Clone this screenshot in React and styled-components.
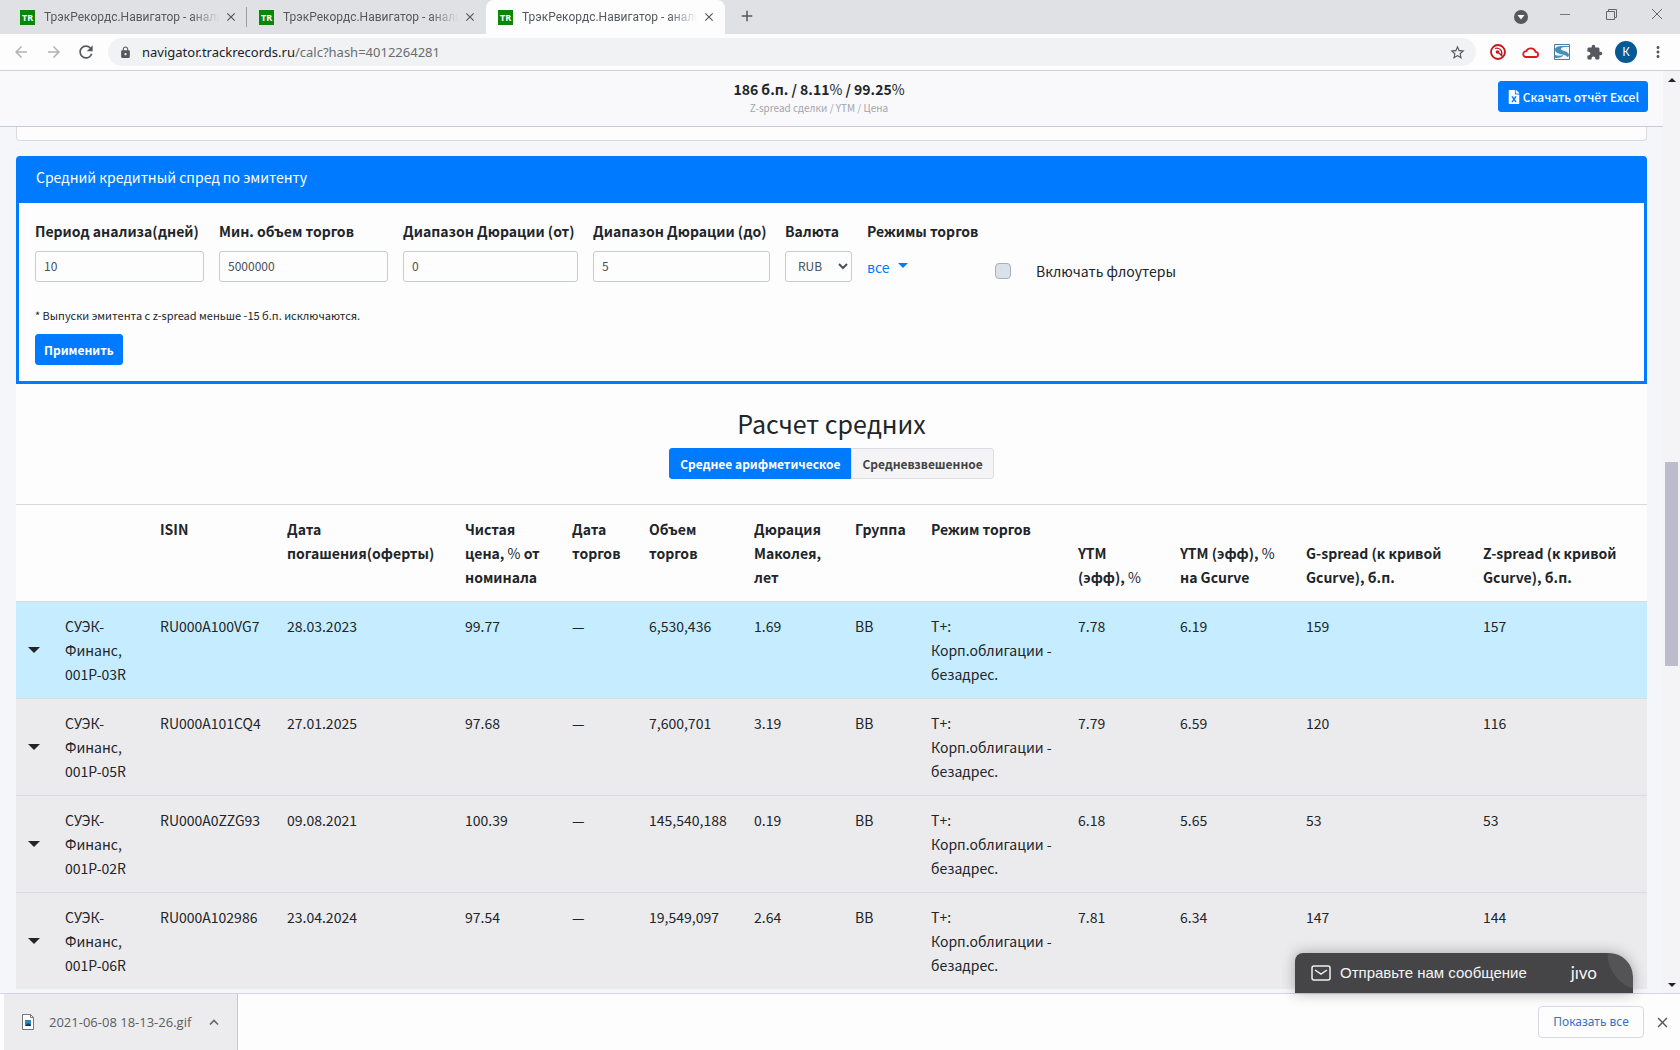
import React from 'react'
import styled, { createGlobalStyle } from 'styled-components'
import { FaFileExcel } from 'react-icons/fa'
import { MdArrowBack, MdArrowForward, MdRefresh, MdLock, MdStarBorder, MdExtension, MdMoreVert, MdClose, MdAdd } from 'react-icons/md'

const siteFont = '"Noto Sans CJK SC", "Noto Sans", sans-serif'
const chromeFont = '"Noto Sans", "Open Sans", sans-serif'
const blue = '#007bff'

const GlobalStyle = createGlobalStyle`
  *, *:before, *:after {
    box-sizing: border-box;
  }

  body {
    margin: 0;
    overflow: hidden;
    font-family: ${siteFont};
    font-size: 14px;
    line-height: 24px;
    color: #212529;
  }

  button, input, select {
    font-family: inherit;
  }

  svg {
    display: block;
    flex: none;
  }
`

const Browser = styled.div`
  display: flex;
  flex-direction: column;
  height: 100vh;
`

/* tabs */

const TabStrip = styled.div`
  display: flex;
  flex: none;
  height: 34px;
  padding-left: 8px;
  background: #dfe1e5;
`

const Tab = styled.div`
  display: flex;
  align-items: center;
  gap: 9px;
  width: 239px;
  padding: 0 7px 0 12px;
  border-radius: 8px 8px 0 0;
  border-right: 1px solid ${p => (p.$divider ? '#9a9da1' : 'transparent')};
  border-image: ${p => (p.$divider ? 'linear-gradient(transparent 22%, #9a9da1 22%, #9a9da1 78%, transparent 78%) 1' : 'none')};
  background: ${p => (p.$active ? '#fdfdfe' : 'transparent')};
`

const Favicon = styled.span`
  flex: none;
  width: 15px;
  height: 15px;
  background: #0a870a;
  color: #fff;
  font: bold 9px/15px "Open Sans", sans-serif;
  text-align: center;
`

const TabTitle = styled.span`
  flex: 1;
  min-width: 0;
  margin-right: -9px;
  white-space: nowrap;
  font-family: Roboto, sans-serif;
  font-size: 12px;
  line-height: 16px;
  color: #55585c;
  mask-image: linear-gradient(to right, #000 82%, transparent 98%);
`

const IconButton = styled.button`
  display: flex;
  align-items: center;
  justify-content: center;
  flex: none;
  width: ${p => p.$width || 16}px;
  height: ${p => p.$height || 16}px;
  padding: 0;
  border: 0;
  background: none;
  color: ${p => p.$color || '#55585c'};
`

const WindowControls = styled.div`
  display: flex;
  margin-left: auto;
`

/* address bar */

const Toolbar = styled.div`
  display: flex;
  align-items: center;
  flex: none;
  height: 37px;
  padding: 0 6px 0 5px;
  border-bottom: 1px solid #cfcfd4;
  background: #fdfdfe;
  font-family: ${chromeFont};
`

const Omnibox = styled.div`
  display: flex;
  align-items: center;
  flex: 1;
  gap: 10px;
  height: 28px;
  margin: 0 6px 0 6px;
  padding: 0 10px 0 11px;
  border-radius: 14px;
  background: #f0f2f4;
  font-size: 13px;
  line-height: 20px;
  color: #6a6d71;
`

const Url = styled.span`
  flex: 1;

  b {
    font-weight: normal;
    color: #202124;
  }
`

const Avatar = styled.span`
  width: 22px;
  height: 22px;
  border-radius: 50%;
  background: #065a94;
  color: #fff;
  font-size: 12px;
  line-height: 22px;
  text-align: center;
`

/* page */

const Viewport = styled.div`
  position: relative;
  display: flex;
  flex: 1;
  min-height: 0;
`

const Page = styled.main`
  flex: 1;
  overflow: hidden;
  background: #f5f6f9;
`

const PageHeader = styled.header`
  display: grid;
  grid-template-columns: 1fr auto 1fr;
  align-items: start;
  height: 56px;
  padding: 8px 15px 0 0;
  border-bottom: 1px solid #c9c9dc;
  background: #f9f9fb;
`

const Summary = styled.div`
  grid-column: 2;
  margin-right: 10px;
  text-align: center;
  font-size: 14px;
  line-height: 20px;
  font-weight: bold;
`

const SummaryNote = styled.div`
  font-size: 10px;
  line-height: 18px;
  font-weight: normal;
  color: #a4a4ac;
`

const Thin = styled.span`
  font-weight: normal;
`

const Button = styled.button`
  display: inline-flex;
  align-items: center;
  justify-content: center;
  gap: 2px;
  height: 31px;
  padding: 0 ${p => (p.$wide ? 10 : 8)}px;
  border: 1px solid ${p => (p.$light ? '#dddde2' : blue)};
  border-radius: ${p => p.$radius || '3px'};
  background: ${p => (p.$light ? '#f4f4f6' : blue)};
  color: ${p => (p.$light ? '#444' : '#fff')};
  font-size: 12px;
  line-height: 18px;
  font-weight: ${p => (p.$medium ? 500 : 'bold')};
  white-space: nowrap;
`

const HeaderAction = styled.div`
  justify-self: end;
  padding-top: 2px;
`

const PreviousCard = styled.div`
  height: 14px;
  margin: 0 16px 15px;
  border: 1px solid #dadadf;
  border-top: 0;
  border-radius: 0 0 4px 4px;
  background: #fdfdfe;
`

const Content = styled.section`
  margin: 0 16px;
  background: #fdfdfe;
`

const FilterCard = styled.form`
  border: 3px solid ${blue};
  border-radius: 4px 4px 0 0;
`

const FilterTitle = styled.div`
  height: 44px;
  padding: 6px 17px 0;
  background: ${blue};
  color: #fff;
`

const FilterBody = styled.div`
  padding: 16px;
`

const Fields = styled.div`
  display: flex;
  gap: 15px;
  height: 87px;
`

const Field = styled.div`
  display: flex;
  flex-direction: column;
  gap: 8px;
  width: ${p => p.$width}px;
  white-space: nowrap;
  font-weight: bold;
`

const inputStyle = `
  width: 100%;
  height: 31px;
  border: 1px solid #c6cada;
  border-radius: 3px;
  background: #fdfdfe;
  color: #495057;
  font-size: 12px;
`

const Input = styled.input`
  ${inputStyle}
  padding: 2px 8px 4px;
`

const Select = styled.select`
  ${inputStyle}
  padding: 2px 0 4px 8px;
`

const ModeLink = styled.a`
  display: flex;
  gap: 8px;
  padding-top: 4px;
  font-weight: normal;
  color: ${blue};
  text-decoration: none;

  svg {
    margin-top: 8px;
  }
`

const CheckLabel = styled.label`
  display: flex;
  align-items: center;
  align-self: flex-start;
  gap: 25px;
  padding-top: 40px;
`

const Checkbox = styled.input`
  appearance: none;
  width: 16px;
  height: 16px;
  margin: 0;
  border: 1px solid #a8b0bb;
  border-radius: 4px;
  background: #dbe1e8;
`

const Note = styled.p`
  height: 28px;
  margin: 0;
  font-size: 11px;
  line-height: 18px;
`

const Averages = styled.div`
  height: 120px;
  padding-top: 22px;
  text-align: center;
`

const Title = styled.h3`
  margin: 0 0 8px;
  font-size: 25px;
  line-height: 34px;
  font-weight: normal;
`

const Toggle = styled.div`
  display: flex;
  justify-content: center;
`

const Table = styled.table`
  width: 100%;
  table-layout: fixed;
  border-collapse: collapse;

  th, td {
    padding: 12px 0 12px 12px;
    border-top: 1px solid #dadade;
    text-align: left;
    vertical-align: top;
  }
`

const HeadCell = styled.th`
  && {
    vertical-align: ${p => (p.$bottom ? 'bottom' : 'top')};
  }
`

const Row = styled.tr`
  background: ${p => (p.$selected ? '#c5edff' : '#ebebee')};

  && td:first-child {
    vertical-align: middle;
  }
`

const Scrollbar = styled.div`
  display: flex;
  flex-direction: column;
  align-items: center;
  justify-content: space-between;
  width: 17px;
  padding: 7px 0 6px;
  background: #f4f4f6;
`

const Thumb = styled.div`
  width: 13px;
  height: 204px;
  margin-top: 62px;
  background: #bcbccc;
`

const Chat = styled.button`
  position: absolute;
  right: 47px;
  bottom: 0;
  display: flex;
  align-items: center;
  width: 338px;
  height: 40px;
  padding: 0 36px 0 16px;
  border: 0;
  border-radius: 8px 24px 0 0;
  background: radial-gradient(circle at 350px 0, #545456 37px, #454547 38px);
  box-shadow: 0 0 14px rgba(0, 0, 0, 0.3);
  color: #f5f5f5;

  && {
    font: 15px/20px "Liberation Sans", Arial, sans-serif;
  }

  svg {
    margin-right: 9px;
  }
`

const Jivo = styled.span`
  margin-left: auto;
  font: 17px/20px Lato, sans-serif;
`

/* downloads */

const Downloads = styled.footer`
  display: flex;
  align-items: center;
  flex: none;
  height: 57px;
  padding: 0 9px 0 4px;
  border-top: 1px solid #d4d4e2;
  background: #fdfdfe;
  font-family: ${chromeFont};
  font-size: 12px;
`

const Download = styled.div`
  display: flex;
  align-items: center;
  width: 234px;
  height: 56px;
  padding: 0 15px 0 18px;
  border-right: 1px solid #c6c6cc;
  background: #ececee;
  color: #5b5d61;

  span {
    flex: 1;
    margin-left: 15px;
    font-family: "Open Sans", sans-serif;
    font-size: 13px;
    white-space: nowrap;
  }
`

const ShowAll = styled.button`
  width: 106px;
  height: 32px;
  margin: 0 9px 0 auto;
  padding: 0 0 2px;
  border: 1px solid #d8d8e0;
  border-radius: 4px;
  background: none;
  color: #3b6fc4;
  font-size: 12px;
`

const columns = [
  { width: 37 },
  { width: 95 },
  { width: 127, title: 'ISIN' },
  { width: 178, title: <>Дата<br />погашения(оферты)</> },
  { width: 107, title: <>Чистая<br />цена, <Thin>%</Thin> от<br />номинала</> },
  { width: 77, title: <>Дата<br />торгов</> },
  { width: 105, title: <>Объем<br />торгов</> },
  { width: 101, title: <>Дюрация<br />Маколея,<br />лет</> },
  { width: 76, title: 'Группа' },
  { width: 147, title: 'Режим торгов' },
  { width: 102, bottom: true, title: <>YTM<br />(эфф), <Thin>%</Thin></> },
  { width: 126, bottom: true, title: <>YTM (эфф), <Thin>%</Thin><br />на Gcurve</> },
  { width: 177, bottom: true, title: <>G-spread (к кривой<br />Gcurve), б.п.</> },
  { width: 176, bottom: true, title: <>Z-spread (к кривой<br />Gcurve), б.п.</> },
]

const rows = [
  ['001P-03R', 'RU000A100VG7', '28.03.2023', '99.77', '6,530,436', '1.69', '7.78', '6.19', '159', '157'],
  ['001P-05R', 'RU000A101CQ4', '27.01.2025', '97.68', '7,600,701', '3.19', '7.79', '6.59', '120', '116'],
  ['001P-02R', 'RU000A0ZZG93', '09.08.2021', '100.39', '145,540,188', '0.19', '6.18', '5.65', '53', '53'],
  ['001P-06R', 'RU000A102986', '23.04.2024', '97.54', '19,549,097', '2.64', '7.81', '6.34', '147', '144'],
]

const fields = [
  { id: 'period', label: 'Период анализа(дней)', value: '10', width: 169 },
  { id: 'volume', label: 'Мин. объем торгов', value: '5000000', width: 169 },
  { id: 'from', label: 'Диапазон Дюрации (от)', value: '0', width: 175 },
  { id: 'to', label: 'Диапазон Дюрации (до)', value: '5', width: 177 },
]

const Triangle = ({ width = 12, up }) => (
  <svg width={width} height={width / 2} viewBox="0 0 12 6">
    <path d={up ? 'M0 6h12L6 0z' : 'M0 0h12L6 6z'} fill="currentColor" />
  </svg>
)

const Tabs = () => (
  <TabStrip>
    {[0, 1, 2].map(i => (
      <Tab key={i} $active={i === 2} $divider={i === 0}>
        <Favicon>TR</Favicon>
        <TabTitle>ТрэкРекордс.Навигатор - анали</TabTitle>
        <IconButton aria-label="Закрыть вкладку"><MdClose size={14} /></IconButton>
      </Tab>
    ))}
    <IconButton $width={44} $height={32} aria-label="Новая вкладка"><MdAdd size={18} /></IconButton>
    <WindowControls>
      <IconButton $width={43} $height={34} aria-label="Поиск вкладок">
        <svg width="14" height="14" viewBox="0 0 14 14">
          <circle cx="7" cy="7" r="7" fill="#55585c" />
          <path d="M3.5 5h7L7 9.5z" fill="#fff" />
        </svg>
      </IconButton>
      <IconButton $width={46} $height={28} aria-label="Свернуть">
        <svg width="10" height="10"><path d="M0 5.5h10" stroke="#777" /></svg>
      </IconButton>
      <IconButton $width={46} $height={28} aria-label="Развернуть">
        <svg width="11" height="11" fill="none" stroke="#666">
          <path d="M.5 2.5h8v8h-8zM2.5 2.5v-2h8v8h-2" />
        </svg>
      </IconButton>
      <IconButton $width={46} $height={28} aria-label="Закрыть">
        <svg width="10" height="10"><path d="M0 0l10 10M10 0L0 10" stroke="#666" /></svg>
      </IconButton>
    </WindowControls>
  </TabStrip>
)

const AddressBar = () => (
  <Toolbar>
    <IconButton $width={32} $color="#b0b2b8" aria-label="Назад"><MdArrowBack size={18} /></IconButton>
    <IconButton $width={33} $color="#b0b2b8" aria-label="Вперёд"><MdArrowForward size={18} /></IconButton>
    <IconButton $width={32} aria-label="Обновить"><MdRefresh size={20} /></IconButton>
    <Omnibox>
      <MdLock size={13} color="#55585c" />
      <Url><b>navigator.trackrecords.ru</b>/calc?hash=4012264281</Url>
      <MdStarBorder size={17} color="#55585c" />
    </Omnibox>
    <IconButton $width={32} aria-label="Радар">
      <svg width="16" height="16" viewBox="0 0 16 16" fill="none" stroke="#c4161c">
        <circle cx="8" cy="8" r="7" strokeWidth="1.8" />
        <path d="M5 4.5a5 5 0 0 1 6.5 6.5" strokeWidth="1.2" />
        <path d="M8 8l4.5 4.5" strokeWidth="1.4" />
        <circle cx="7.5" cy="8" r="1.8" fill="#c4161c" stroke="none" />
      </svg>
    </IconButton>
    <IconButton $width={32} aria-label="Облако">
      <svg width="17" height="12" viewBox="0 0 17 12" fill="none" stroke="#dc1a20" strokeWidth="1.8">
        <path d="M4 11h9.5a2.6 2.6 0 0 0 0-5.2A5 5 0 0 0 4.3 5.2 2.9 2.9 0 0 0 4 11z" />
      </svg>
    </IconButton>
    <IconButton $width={32} aria-label="Расширение S">
      <svg width="16" height="16" viewBox="0 0 16 16">
        <path d="M.5.5h15v15H.5z" fill="#f4f8fa" stroke="#4d7d99" />
        <path d="M1 6c0-3 3-4 7-4h7v1c-5 0-8 0-8 2s8 2 8 6c0 1-1 2-2 2 0-3-12-2-12-7z" fill="#4a8db5" />
        <path d="M1 11c3 1 6 1 8 0 0 2-3 3-8 3z" fill="#4a8db5" />
      </svg>
    </IconButton>
    <IconButton $width={32} aria-label="Расширения"><MdExtension size={17} /></IconButton>
    <IconButton $width={32} aria-label="Профиль"><Avatar>К</Avatar></IconButton>
    <IconButton $width={32} aria-label="Меню"><MdMoreVert size={18} /></IconButton>
  </Toolbar>
)

const Filters = () => (
  <FilterCard onSubmit={e => e.preventDefault()}>
    <FilterTitle>Средний кредитный спред по эмитенту</FilterTitle>
    <FilterBody>
      <Fields>
        {fields.map(f => (
          <Field key={f.id} $width={f.width}>
            <label htmlFor={f.id}>{f.label}</label>
            <Input id={f.id} defaultValue={f.value} />
          </Field>
        ))}
        <Field $width={67}>
          <label htmlFor="currency">Валюта</label>
          <Select id="currency"><option>RUB</option></Select>
        </Field>
        <Field $width={113}>
          <span>Режимы торгов</span>
          <ModeLink href="#">все <Triangle width={10} /></ModeLink>
        </Field>
        <CheckLabel>
          <Checkbox type="checkbox" />
          Включать флоутеры
        </CheckLabel>
      </Fields>
      <Note>* Выпуски эмитента с z-spread меньше -15 б.п. исключаются.</Note>
      <Button>Применить</Button>
    </FilterBody>
  </FilterCard>
)

const Bonds = () => (
  <Table>
    <colgroup>
      {columns.map((c, i) => <col key={i} width={c.width} />)}
    </colgroup>
    <thead>
      <tr>
        {columns.map((c, i) => <HeadCell key={i} $bottom={c.bottom}>{c.title}</HeadCell>)}
      </tr>
    </thead>
    <tbody>
      {rows.map(([series, isin, date, price, volume, duration, ...rest], i) => (
        <Row key={isin} $selected={i === 0}>
          <td><Triangle /></td>
          <td>СУЭК-<br />Финанс,<br />{series}</td>
          <td>{isin}</td>
          <td>{date}</td>
          <td>{price}</td>
          <td>—</td>
          <td>{volume}</td>
          <td>{duration}</td>
          <td>BB</td>
          <td>Т+:<br />Корп.облигации -<br />безадрес.</td>
          {rest.map((value, j) => <td key={j}>{value}</td>)}
        </Row>
      ))}
    </tbody>
  </Table>
)

const App = () => (
  <Browser>
    <GlobalStyle />
    <Tabs />
    <AddressBar />
    <Viewport>
      <Page>
        <PageHeader>
          <Summary>
            186 б.п. / 8.11<Thin>%</Thin> / 99.25<Thin>%</Thin>
            <SummaryNote>Z-spread сделки / YTM / Цена</SummaryNote>
          </Summary>
          <HeaderAction>
            <Button $medium><FaFileExcel size={14} />Скачать отчёт Excel</Button>
          </HeaderAction>
        </PageHeader>
        <PreviousCard />
        <Content>
          <Filters />
          <Averages>
            <Title>Расчет средних</Title>
            <Toggle>
              <Button $wide $radius="3px 0 0 3px">Среднее арифметическое</Button>
              <Button $wide $light $radius="0 3px 3px 0">Средневзвешенное</Button>
            </Toggle>
          </Averages>
          <Bonds />
        </Content>
      </Page>
      <Scrollbar>
        <Triangle width={8} up />
        <Thumb />
        <Triangle width={8} />
      </Scrollbar>
      <Chat>
        <svg width="20" height="16" viewBox="0 0 20 16" fill="none" stroke="#f0f0f0" strokeWidth="1.5">
          <rect x="1" y="1" width="18" height="14" rx="2" />
          <path d="M4 5l6 4 6-4" />
        </svg>
        Отправьте нам сообщение
        <Jivo>jıvo</Jivo>
      </Chat>
    </Viewport>
    <Downloads>
      <Download>
        <svg width="12" height="16" viewBox="0 0 12 16">
          <path d="M.5.5h8l3 3v12H.5z" fill="#fff" stroke="#777" />
          <path d="M8.5.5v3h3" fill="none" stroke="#777" />
          <path d="M3 6h6v6H3z" fill="#2c88b8" />
          <path d="M3 12l3-3 3 2v1z" fill="#173a5c" />
        </svg>
        <span>2021-06-08 18-13-26.gif</span>
        <IconButton aria-label="Действия">
          <svg width="10" height="6"><path d="M1 5.5l4-4 4 4" fill="none" stroke="#666" strokeWidth="1.6" /></svg>
        </IconButton>
      </Download>
      <ShowAll>Показать все</ShowAll>
      <IconButton $width={18} aria-label="Закрыть панель"><MdClose size={17} /></IconButton>
    </Downloads>
  </Browser>
)

export default App
